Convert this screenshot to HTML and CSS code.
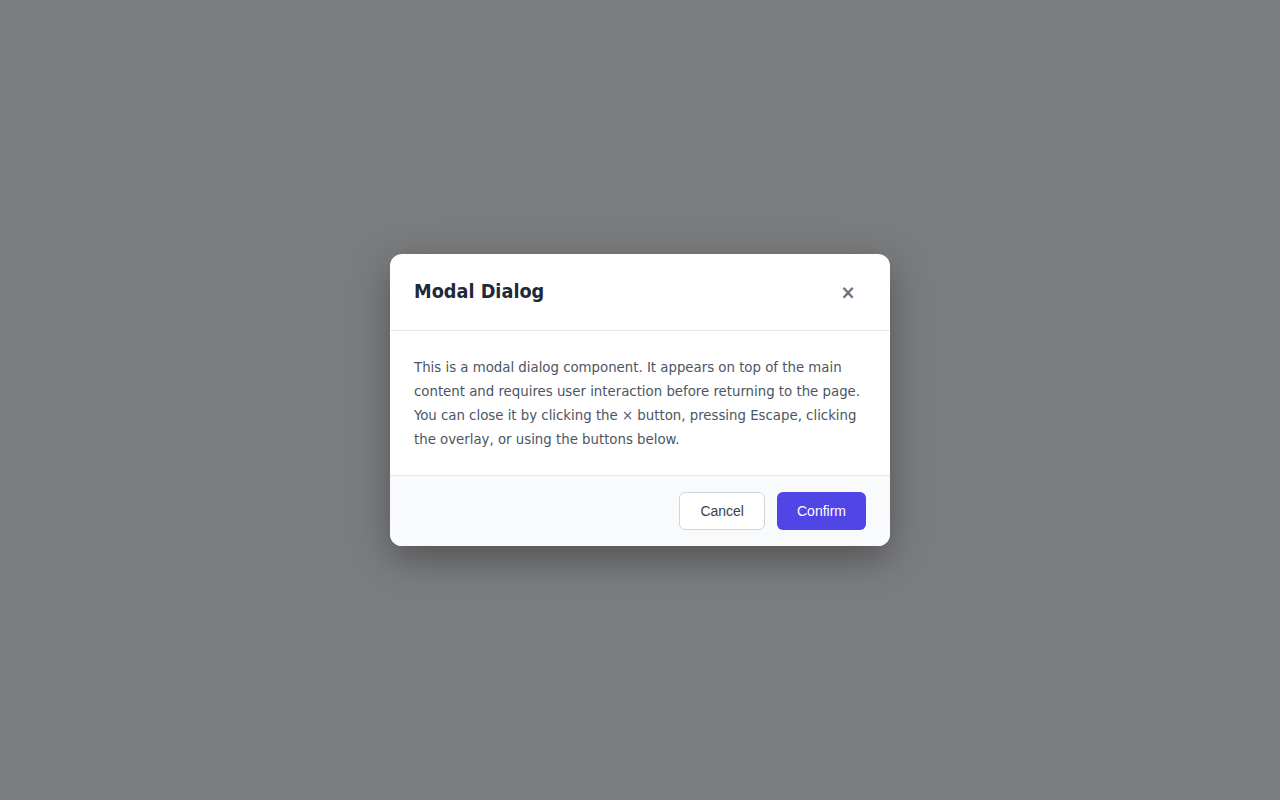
FILE: index.html
```html
<!DOCTYPE html>
<html lang="en">

<head>
    <meta charset="utf-8">
    <meta name="viewport" content="width=device-width, initial-scale=1.0">
    <title>Modal Dialog</title>

    <link rel="stylesheet" href="styles.css">
</head>

<body>
    <div class="overlay">
        <div class="modal" role="dialog" aria-labelledby="modal-title">
            <header class="modal-header">
                <h2 id="modal-title" class="modal-title">Modal Dialog</h2>
                <button class="modal-close" aria-label="Close">&times;</button>
            </header>

            <div class="modal-body">
                <p>This is a modal dialog component. It appears on top of the main content and requires user interaction before returning to the page. You can close it by clicking the &times; button, pressing Escape, clicking the overlay, or using the buttons below.</p>
            </div>

            <footer class="modal-footer">
                <button class="btn btn-secondary">Cancel</button>
                <button class="btn btn-primary">Confirm</button>
            </footer>
        </div>
    </div>
</body>

</html>
```

FILE: styles.css
```css
body {
    margin: 0;
    background-color: #f9fafb;
    font-family: Tahoma, 'DejaVu Sans Condensed', 'DejaVu Sans', sans-serif;
}

.overlay {
    display: flex;
    align-items: center;
    justify-content: center;
    min-height: 100vh;
    background-color: #7b7c7e;
}

.modal {
    width: 500px;
    background-color: white;
    border-radius: 12px;
    overflow: hidden;
    box-shadow: 0 20px 25px -5px rgba(0, 0, 0, 0.1), 0 10px 40px rgba(0, 0, 0, 0.25);
}

.modal-header {
    display: flex;
    align-items: center;
    justify-content: space-between;
    padding: 24px;
    border-bottom: 1px solid #e5e7eb;
}

.modal-title {
    margin: 0;
    font-size: 19.7px;
    line-height: 28px;
    font-weight: bold;
    color: #1f2937;
}

.modal-close {
    width: 36px;
    height: 28px;
    padding: 0;
    border: none;
    background: none;
    color: #6b7280;
    font-family: inherit;
    font-size: 20px;
    line-height: 1;
    font-weight: bold;
    cursor: pointer;
}

.modal-body {
    padding: 24px;
}

.modal-body p {
    margin: 0;
    font-size: 14.8px;
    line-height: 24px;
    color: #4b5563;
}

.modal-footer {
    display: flex;
    justify-content: flex-end;
    gap: 12px;
    padding: 16px 24px;
    background-color: #f9fafb;
    border-top: 1px solid #e5e7eb;
}

.btn {
    padding: 9px 20px;
    border-radius: 6px;
    font-family: 'Liberation Sans', Arial, sans-serif;
    font-size: 14px;
    line-height: 18px;
    cursor: pointer;
}

.btn-secondary {
    background-color: white;
    border: 1px solid #d1d5db;
    color: #374151;
}

.btn-primary {
    background-color: #4f46e5;
    border: none;
    color: white;
}
```
